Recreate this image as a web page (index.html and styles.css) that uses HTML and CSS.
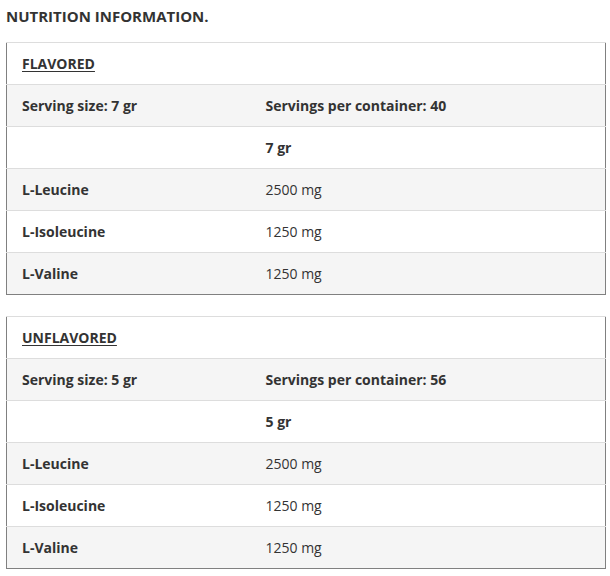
FILE: index.html
```html
<!DOCTYPE html>
<html>
<head>
<meta charset="utf-8">
<link rel="stylesheet" href="styles.css">
</head>
<body>
<h2 class="title">NUTRITION INFORMATION.</h2>
<table class="nt">
  <colgroup><col class="c1"><col class="c2"></colgroup>
  <tr><td colspan="2" class="cap"><u>FLAVORED</u></td></tr>
  <tr><td class="b">Serving size: 7 gr</td><td class="b">Servings per container: 40</td></tr>
  <tr><td></td><td class="b">7 gr</td></tr>
  <tr><td class="b">L-Leucine</td><td>2500 mg</td></tr>
  <tr><td class="b">L-Isoleucine</td><td>1250 mg</td></tr>
  <tr><td class="b">L-Valine</td><td>1250 mg</td></tr>
</table>
<table class="nt">
  <colgroup><col class="c1"><col class="c2"></colgroup>
  <tr><td colspan="2" class="cap"><u>UNFLAVORED</u></td></tr>
  <tr><td class="b">Serving size: 5 gr</td><td class="b">Servings per container: 56</td></tr>
  <tr><td></td><td class="b">5 gr</td></tr>
  <tr><td class="b">L-Leucine</td><td>2500 mg</td></tr>
  <tr><td class="b">L-Isoleucine</td><td>1250 mg</td></tr>
  <tr><td class="b">L-Valine</td><td>1250 mg</td></tr>
</table>
</body>
</html>
```

FILE: styles.css
```css
html, body {
  margin: 0;
  padding: 0;
  background: #fff;
}
body {
  padding: 0 5px 0 6px;
  font-family: "Open Sans", "Liberation Sans", sans-serif;
  font-size: 14px;
  color: #333;
}
.title {
  margin: 0;
  padding-top: 6px;
  height: 42px;
  box-sizing: border-box;
  font-size: 15px;
  font-weight: 700;
  line-height: 20px;
  color: #333;
}
.nt {
  width: 600px;
  border-collapse: collapse;
  border-left: 1px solid #808080;
  border-right: 1px solid #808080;
  border-bottom: 1px solid #808080;
  margin-bottom: 21px;
}
.nt .c1 { width: 244px; }
.nt td {
  border-top: 1px solid #ddd;
  padding: 11px 15px 11px 15px;
  height: 19px;
  line-height: 19px;
  text-align: left;
  vertical-align: middle;
}
.nt tr:nth-child(even) td { background: #f5f5f5; }
.nt tr:nth-child(odd) td { background: #fff; }
.nt .b { font-weight: 700; }
.nt .cap { font-weight: 700; }
.nt .cap u { text-decoration: underline; text-underline-offset: 2px; }
```
